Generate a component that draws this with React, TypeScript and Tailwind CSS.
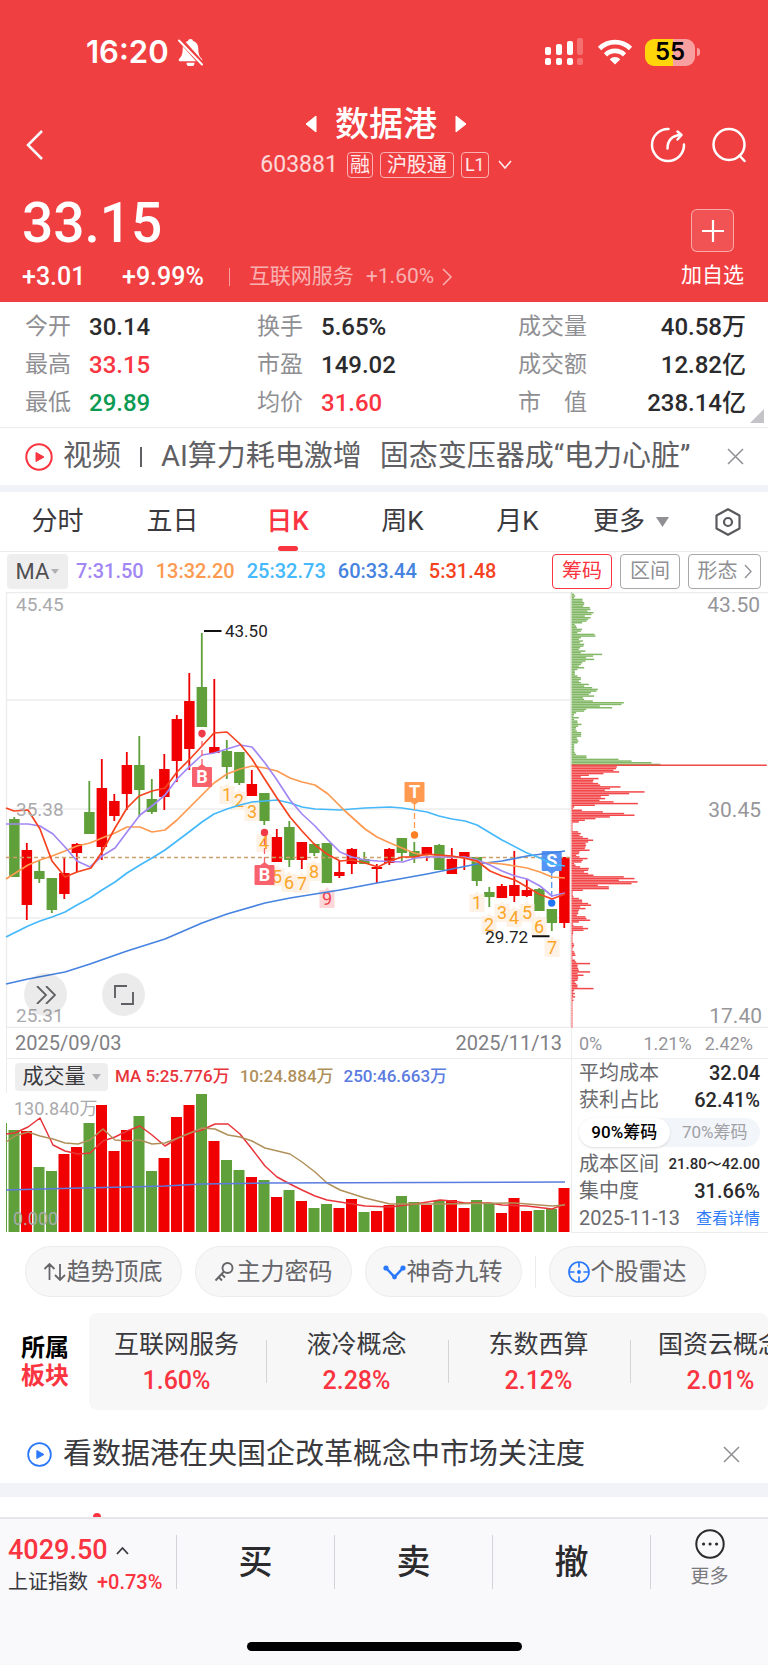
import { useState } from "react";

const UP = "#f00000";
const DOWN = "#5fa03a";

const STATS = [
  { label: "今开", value: "30.14", color: "text-[#2b2b2e]" },
  { label: "换手", value: "5.65%", color: "text-[#2b2b2e]" },
  { label: "成交量", value: "40.58万", color: "text-[#2b2b2e]" },
  { label: "最高", value: "33.15", color: "text-[#fa3440]" },
  { label: "市盈", value: "149.02", color: "text-[#2b2b2e]" },
  { label: "成交额", value: "12.82亿", color: "text-[#2b2b2e]" },
  { label: "最低", value: "29.89", color: "text-[#0a9a52]" },
  { label: "均价", value: "31.60", color: "text-[#fa3440]" },
  { label: "市　值", value: "238.14亿", color: "text-[#2b2b2e]" },
];

const TABS = ["分时", "五日", "日K", "周K", "月K"];

const MA_VALUES = [
  { text: "7:31.50", color: "text-[#a287f4]" },
  { text: "13:32.20", color: "text-[#fd9a52]" },
  { text: "25:32.73", color: "text-[#45b9fb]" },
  { text: "60:33.44", color: "text-[#4683e0]" },
  { text: "5:31.48", color: "text-[#f5431f]" },
];

// [up, high, top, bottom, low] on the y scale of the K line chart
const CANDLES: [number, number, number, number, number][] = [
  [0, 817, 819, 877, 877], [1, 843, 850, 905, 920], [0, 861, 871, 879, 883], [0, 878, 878, 910, 913],
  [1, 858, 873, 894, 899], [1, 843, 844, 853, 872], [0, 781, 812, 834, 834], [1, 759, 788, 847, 860],
  [1, 794, 801, 816, 821], [1, 752, 765, 794, 810], [0, 736, 765, 790, 817], [0, 779, 799, 812, 814],
  [1, 754, 769, 797, 810], [1, 715, 719, 761, 782], [1, 673, 701, 749, 770], [0, 633, 687, 727, 727],
  [1, 679, 747, 753, 753], [0, 740, 751, 767, 779], [0, 752, 752, 783, 785], [1, 770, 784, 796, 796],
  [0, 793, 793, 821, 825], [1, 829, 837, 862, 862], [0, 821, 827, 860, 867], [1, 842, 842, 860, 869],
  [0, 843, 844, 853, 856], [0, 843, 843, 883, 883], [1, 861, 872, 876, 878], [1, 848, 849, 864, 874],
  [0, 852, 859, 864, 864], [1, 864, 867, 869, 883], [1, 848, 849, 863, 865], [0, 838, 838, 853, 861],
  [0, 842, 851, 857, 863], [1, 847, 847, 855, 861], [0, 844, 845, 870, 870], [1, 848, 859, 874, 874],
  [1, 852, 852, 857, 870], [0, 857, 857, 881, 886], [0, 887, 892, 897, 907], [1, 884, 886, 898, 898],
  [1, 851, 885, 896, 902], [1, 879, 890, 896, 897], [0, 888, 889, 911, 911], [0, 909, 909, 923, 931],
  [1, 857, 857, 923, 928],
];

const VOLUMES = [
  102, 101, 65, 61, 78, 85, 109, 127, 81, 102, 116, 61, 74, 115, 127, 138, 91, 72, 62, 55, 52, 35, 42,
  31, 24, 28, 24, 33, 20, 21, 27, 36, 30, 27, 31, 32, 24, 32, 28, 19, 34, 21, 22, 23, 44,
];

const K_LINES = [
  { color: "#4683e0", points: "6,984 28,979 65,972 90,964 127,951 165,939 202,923 227,914 265,903 290,898 340,890 377,883 427,874 477,864 502,861 527,856 565,851" },
  { color: "#45b9fb", points: "6,937 28,926 40,921 52,917 65,912 77,905 90,898 102,890 115,882 127,873 140,865 152,858 165,850 177,841 189,832 202,822 214,814 227,809 240,805 252,802 265,801 277,800 290,803 302,807 315,809 340,810 352,809 365,808 390,807 402,808 415,810 427,812 439,816 452,819 465,821 477,825 502,840 527,853 540,858 552,864 565,866" },
  { color: "#fd9a52", points: "6,879 28,865 40,860 52,856 65,851 77,846 90,843 102,838 115,833 127,827 140,827 152,832 165,830 177,820 189,808 202,795 214,783 227,774 240,769 252,766 265,768 277,771 290,778 302,782 315,785 328,794 345,811 365,829 377,837 390,843 402,848 414,853 427,856 452,857 465,858 477,862 490,863 502,864 515,866 527,868 540,872 552,877 565,878" },
  { color: "#a287f4", points: "6,824 28,824 40,826 53,834 65,847 77,861 90,867 102,856 115,848 127,832 140,815 152,806 165,795 177,779 189,767 202,755 214,753 227,749 240,745 252,747 265,763 277,780 290,800 302,814 315,826 328,840 340,852 352,857 365,860 378,861 403,862 415,858 427,857 465,857 477,860 490,865 502,871 515,876 527,879 540,886 552,896 565,893" },
  { color: "#f5431f", points: "6,808 14,811 28,810 40,829 52,861 65,877 77,872 91,868 102,852 115,828 127,808 139,796 152,791 165,788 177,772 189,760 202,746 214,733 227,732 240,744 252,759 264,778 277,798 290,817 302,831 315,845 327,854 340,861 352,860 365,863 378,867 390,861 402,857 414,857 427,854 439,855 452,856 464,858 477,861 490,871 502,876 515,880 527,887 539,894 552,899 565,894" },
];

const VOL_LINES = [
  { color: "#e8353b", points: "6,1134 15,1133 28,1127 40,1118 53,1145 65,1151 78,1154 90,1153 103,1141 115,1137 127,1131 140,1126 152,1135 165,1146 178,1138 190,1133 202,1130 215,1124 228,1124 240,1134 252,1149 265,1166 277,1177 290,1184 302,1190 315,1196 327,1200 340,1202 365,1206 390,1207 415,1204 440,1200 452,1201 465,1203 490,1203 502,1205 527,1206 552,1209 565,1204" },
  { color: "#b0905a", points: "6,1142 15,1136 28,1132 40,1136 53,1139 65,1143 78,1144 90,1140 103,1129 115,1140 127,1141 140,1140 152,1144 165,1143 178,1138 202,1128 215,1129 228,1135 240,1137 252,1141 265,1148 290,1154 302,1162 315,1172 327,1183 340,1190 365,1198 390,1204 440,1204 515,1203 552,1206 565,1205" },
  { color: "#5b7be0", points: "6,1190 80,1188 127,1187 165,1186 202,1184 265,1183 565,1182" },
];

const COUNTS: [string, number, number][] = [
  ["1", 227, 794], ["2", 239, 800], ["3", 252, 811], ["4", 264, 842], ["5", 277, 876], ["6", 289, 882],
  ["7", 302, 883], ["8", 314, 871], ["9", 327, 898], ["1", 477, 902], ["2", 489, 924], ["3", 502, 912],
  ["4", 514, 917], ["5", 527, 912], ["6", 539, 926], ["7", 552, 947],
];

// chip distribution, three units to a pixel, one row per price step
const CHIPS_ABOVE = [
  2, 8, 11, 8, 33, 33, 38, 38, 35, 55, 57, 48, 66, 60, 40, 57, 50, 45, 32, 10, 14, 16, 32, 28, 18, 69, 72,
  28, 22, 34, 25, 38, 36, 26, 22, 42, 28, 92, 65, 44, 68, 42, 32, 28, 22, 38, 18, 10, 10, 10, 18, 28, 28,
  22, 28, 52, 38, 62, 79, 75, 58, 52, 68, 34, 38, 64, 157, 150, 85, 122, 44, 38, 14, 8, 6, 22, 8, 18, 18,
  30, 20, 14, 12, 16, 29, 29, 29, 16, 18, 21, 18, 8, 8, 8, 8, 8, 10, 14, 45, 45, 141, 180, 240, 267,
];
const CHIPS_BELOW = [
  586, 136, 134, 126, 143, 96, 52, 28, 81, 66, 64, 80, 86, 147, 116, 100, 219, 173, 112, 88, 101, 84, 126,
  199, 70, 8, 4, 31, 94, 158, 189, 115, 72, 40, 22, 3, 3, 3, 3, 3, 20, 28, 24, 34, 50, 65, 50, 42, 44, 42,
  40, 54, 24, 22, 14, 24, 48, 34, 30, 8, 12, 26, 52, 50, 38, 50, 66, 157, 189, 142, 198, 180, 79, 112, 112,
  34, 4, 3, 4, 6, 22, 32, 32, 50, 59, 26, 42, 22, 20, 20, 16, 42, 45, 56, 22, 4, 6, 34, 50, 36, 5, 5, 3, 3,
  3, 3, 3, 6, 8, 6, 3, 3, 8, 10, 12, 3, 3, 10, 14, 56, 18, 18, 20, 22, 56, 18, 36, 20, 20, 18, 10, 14, 18,
  18, 66, 8, 5, 10, 5, 11, 3, 6, 3, 3, 3, 3, 3, 3, 3, 3, 3, 3, 3, 3, 3, 3, 3, 3,
];

const SECTORS = [
  { name: "互联网服务", pct: "1.60%" },
  { name: "液冷概念", pct: "2.28%" },
  { name: "东数西算", pct: "2.12%" },
  { name: "国资云概念", pct: "2.01%" },
];

const candleX = (i: number) => 14.3 + i * 12.5;

function StatusBar() {
  return (
    <div className="flex h-[104px] items-center justify-between pl-[86px] pr-[68px]">
      <div className="flex items-center gap-2">
        <span className="font-[Inter] text-[31px] font-semibold">16:20</span>
        <svg width="27" height="28" viewBox="0 0 27 28" fill="currentColor">
          <path d="M13.500 1a2.600 2.600 0 0 1 2.600 2.100c3.200 1 5.200 4 5.200 7.400 0 5.500 1.200 8.200 3.300 10 .5.500.700 1 .700 1.500 0 .8-.6 1.300-1.500 1.300H3.200c-.9 0-1.500-.5-1.500-1.300 0-.5.200-1 .7-1.500 2.100-1.800 3.300-4.500 3.300-10 0-3.400 2-6.400 5.200-7.400A2.600 2.600 0 0 1 13.500 1z" />
          <path d="M9.500 24.700h8a4 4 0 0 1-8 0z" />
          <path d="M3 1.500 25 26" stroke="#f03f41" strokeWidth="5" />
          <path d="M2 2.500 25 26.500" stroke="currentColor" strokeWidth="2" strokeLinecap="round" />
        </svg>
      </div>
      <div className="flex items-center">
        <svg width="40" height="28" viewBox="0 0 40 28" fill="currentColor">
          <rect x="0" y="9" width="6" height="8" rx="2" />
          <rect x="11" y="6" width="6" height="11" rx="2" />
          <rect x="22" y="3" width="6" height="14" rx="2" />
          <rect x="32" y="0" width="6" height="17" rx="2" opacity=".25" />
          <rect x="0" y="20" width="6" height="7" rx="2" />
          <rect x="11" y="20" width="6" height="7" rx="2" />
          <rect x="22" y="20" width="6" height="7" rx="2" />
          <rect x="32" y="20" width="6" height="7" rx="2" opacity=".25" />
        </svg>
        <svg className="ml-3" width="36" height="26" viewBox="0 0 36 26" fill="none" stroke="currentColor" strokeWidth="4.600">
          <path d="M2.500 9.500a22 22 0 0 1 31 0" />
          <path d="M8.500 15.800a13.500 13.500 0 0 1 19 0" />
          <path d="M18 25.500 12.700 20.200a7.500 7.500 0 0 1 10.600 0z" fill="currentColor" stroke="none" />
        </svg>
        <div className="ml-3 flex h-[27px] w-[50px] items-center justify-center rounded-[9px] bg-[linear-gradient(90deg,#ffd60a_55%,#f89fa0_55%)] font-[Inter] text-[24px] font-semibold text-black">
          55
        </div>
        <span className="ml-0.5 h-2 w-[3px] rounded-r-full bg-[#f89fa0]" />
      </div>
    </div>
  );
}

function Header() {
  return (
    <header className="bg-[#f03f41] text-white">
      <StatusBar />
      <div className="flex h-[82px] items-center justify-between pl-[26px] pr-[22px]">
        <button aria-label="返回" className="w-24">
          <svg width="18" height="30" viewBox="0 0 18 30" fill="none" stroke="currentColor" strokeWidth="2.500">
            <path d="M16 1 2 15l14 14" />
          </svg>
        </button>
        <div className="flex flex-col items-center">
          <div className="flex h-10 items-center gap-[18px]">
            <button aria-label="上一只">
              <svg width="12" height="18" viewBox="0 0 12 18" fill="currentColor"><path d="M11 1v16L1 9z" stroke="currentColor" strokeLinejoin="round" /></svg>
            </button>
            <h1 className="text-[34px] font-medium leading-10">数据港</h1>
            <button aria-label="下一只">
              <svg width="12" height="18" viewBox="0 0 12 18" fill="currentColor"><path d="M1 1v16l10-8z" stroke="currentColor" strokeLinejoin="round" /></svg>
            </button>
          </div>
          <div className="flex h-[42px] items-center gap-[7px] text-[20px] leading-6 text-white/90">
            <span className="mr-0.5 text-[23px] text-white/80">603881</span>
            <span className="rounded border border-white/60 px-0.5">融</span>
            <span className="rounded border border-white/60 px-1.5">沪股通</span>
            <span className="rounded border border-white/60 px-[3px] text-[18px]">L1</span>
            <svg className="ml-0.5" width="14" height="10" viewBox="0 0 14 10" fill="none" stroke="currentColor" strokeWidth="1.500"><path d="m1 1 6 7 6-7" /></svg>
          </div>
        </div>
        <div className="flex w-24 items-center justify-between">
          <button aria-label="分享">
            <svg width="36" height="36" viewBox="0 0 36 36" fill="none" stroke="currentColor" strokeWidth="2.500" strokeLinecap="round" strokeLinejoin="round">
              <path d="M18.500 2A16 16 0 1 0 34 17.500" />
              <path d="M17.500 21.500c0-7.500 4-12.500 12.500-13.500" />
              <path d="m27.500 4.500 4 3.500-4 4.500" />
            </svg>
          </button>
          <button aria-label="搜索">
            <svg width="34" height="36" viewBox="0 0 34 36" fill="none" stroke="currentColor" strokeWidth="2.500" strokeLinecap="round">
              <circle cx="17" cy="17.500" r="15.500" />
              <path d="m27.500 28.500 5 5.500" />
            </svg>
          </button>
        </div>
      </div>
      <div className="flex h-[116px] justify-between pl-[22px] pr-6">
        <div>
          <p className="flex h-[75px] items-center text-[55px] font-medium">33.15</p>
          <div className="flex h-8 items-center text-[25px] font-medium">
            <span className="w-[100px]">+3.01</span>
            <span>+9.99%</span>
            <span className="ml-[25px] mr-[19px] h-[18px] w-px bg-white/50" />
            <a href="#sector" className="flex items-center text-[21px] font-normal text-white/60">
              互联网服务
              <span className="ml-3">+1.60%</span>
              <svg className="ml-2" width="11" height="18" viewBox="0 0 11 18" fill="none" stroke="currentColor" strokeWidth="1.500"><path d="m1 1 8 8-8 8" /></svg>
            </a>
          </div>
        </div>
        <button className="flex flex-col items-center pt-[23px] text-[21px] leading-[46px]">
          <span className="flex h-[43px] w-[43px] items-center justify-center rounded-md border border-white/50 bg-white/10">
            <svg width="22" height="22" viewBox="0 0 22 22" stroke="currentColor" strokeWidth="2.200"><path d="M11 0v22M0 11h22" /></svg>
          </span>
          加自选
        </button>
      </div>
    </header>
  );
}

function Stats() {
  return (
    <dl className="relative grid grid-cols-[232fr_261fr_228fr] border-b border-[#ececec] pb-[5px] pl-[25px] pr-[22px] pt-1.5 text-[23px] leading-[38px]">
      {STATS.map((s, i) => (
        <div key={s.label} className={i % 3 === 2 ? "flex justify-between" : "flex"}>
          <dt className={i % 3 === 2 ? "text-[#8f8f93]" : "w-16 text-[#8f8f93]"}>{s.label}</dt>
          <dd className={`text-[24px] font-medium ${s.color}`}>{s.value}</dd>
        </div>
      ))}
      <svg className="absolute bottom-1 right-1" width="14" height="14" viewBox="0 0 14 14" fill="#c4c4c8"><path d="M14 0v14H0z" /></svg>
    </dl>
  );
}

function PlayIcon({ size }: { size: number }) {
  return (
    <svg width={size} height={size} viewBox="0 0 28 28" fill="none" stroke="currentColor" strokeWidth="2">
      <circle cx="14" cy="14" r="12.700" />
      <path d="M11 9.500v9l8-4.500z" fill="currentColor" strokeLinejoin="round" strokeWidth="1" />
    </svg>
  );
}

function CloseButton() {
  return (
    <button aria-label="关闭" className="ml-auto text-[#8f8f93]">
      <svg width="17" height="17" viewBox="0 0 17 17" fill="none" stroke="currentColor" strokeWidth="1.500"><path d="m1 1 15 15M16 1 1 16" /></svg>
    </button>
  );
}

function Tabs() {
  const [tab, setTab] = useState("日K");
  return (
    <nav className="flex h-[60px] border-b border-[#ececec] text-[26px] text-[#3a3a3e]">
      {TABS.map((t) => (
        <button key={t} onClick={() => setTab(t)} className={`relative flex-[115] ${tab === t ? "font-medium text-[#fa3440]" : ""}`}>
          {t}
          {tab === t && <span className="absolute bottom-0 left-1/2 h-[5px] w-5 -translate-x-1/2 rounded-full bg-[#fa3440]" />}
        </button>
      ))}
      <button className="flex flex-[112] items-center justify-center gap-[11px]">
        更多
        <svg width="13" height="10" viewBox="0 0 13 10" fill="#909094"><path d="M0 0h13L6.500 10z" /></svg>
      </button>
      <button aria-label="设置" className="flex flex-[81] items-center justify-center text-[#5a5a5e]">
        <svg width="28" height="28" viewBox="0 0 28 28" fill="none" stroke="currentColor" strokeWidth="2.200" strokeLinejoin="round">
          <path d="M14 1.200 25.500 7.500v13L14 26.800 2.500 20.500v-13z" />
          <circle cx="14" cy="14" r="4" />
        </svg>
      </button>
    </nav>
  );
}

function MaBar() {
  return (
    <div className="flex h-10 items-center px-[7px] pb-1 pt-0.5 text-[20px]">
      <button className="flex h-[35px] w-[61px] items-center justify-center gap-0.5 rounded bg-[#eeeeef] text-[22px] text-[#505054]">
        MA
        <svg width="8" height="5" viewBox="0 0 8 5" fill="#b0b0b4"><path d="M0 0h8L4 5z" /></svg>
      </button>
      <div className="ml-2 flex gap-3 font-medium">
        {MA_VALUES.map((m) => (
          <span key={m.text} className={m.color}>{m.text}</span>
        ))}
      </div>
      <div className="ml-auto flex gap-2 text-[#8f8f93]">
        <button className="h-[35px] w-[60px] rounded border border-[#fa3440] text-[#fa3440]">筹码</button>
        <button className="h-[35px] w-[60px] rounded border border-[#a8a8ac]">区间</button>
        <button className="flex h-[35px] w-[73px] items-center justify-center gap-1.5 rounded border border-[#a8a8ac]">
          形态
          <svg width="8" height="15" viewBox="0 0 8 15" fill="none" stroke="currentColor" strokeWidth="1.300"><path d="m1 1 6 6.500L1 14" /></svg>
        </button>
      </div>
    </div>
  );
}

interface SignalProps {
  letter: string;
  x: number;
  y: number;
  dotY: number;
  color: string;
  dotColor: string;
}

function Signal({ letter, x, y, dotY, color, dotColor }: SignalProps) {
  const above = y < dotY;
  return (
    <g>
      <path d={`M${x} ${above ? y + 12 : y - 12}V${dotY}`} stroke={color} strokeWidth="1.300" strokeDasharray="6 3" />
      <circle cx={x} cy={dotY} r="3.700" fill={dotColor} />
      <rect x={x - 10} y={y - 10} width="20" height="20" rx="1" fill={color} />
      <path d={above ? `M${x - 4} ${y + 10}h8l-4 3z` : `M${x - 4} ${y - 10}h8l-4-3z`} fill={color} />
      <text x={x} y={y + 6} textAnchor="middle" fontSize="18" fontWeight="700" fill="#fff">{letter}</text>
    </g>
  );
}

function KLineChart() {
  return (
    <div className="relative">
      <svg className="block w-full" viewBox="0 592 571 436" role="img" aria-label="日K线">
        <g stroke="#ececec" strokeWidth="1.300">
          {[592.7, 700, 809, 918, 1027.3].map((y) => (
            <path key={y} d={`M6 ${y}H571`} />
          ))}
          <path d="M6.500 592V1028M570.500 592V1028" />
        </g>
        {CANDLES.map(([up, high, top, bottom, low], i) => (
          <g key={i} fill={up ? UP : DOWN}>
            <rect x={candleX(i) - 0.9} y={high} width="1.800" height={low - high} />
            <rect x={candleX(i) - 5.2} y={top} width="10.500" height={bottom - top} />
          </g>
        ))}
        <path d="M6 857.500H571" stroke="#c9a06a" strokeWidth="1.300" strokeDasharray="4 3" />
        {COUNTS.map(([n, x, y]) => (
          <g key={n + x}>
            <path d={`M${x - 7.5} ${y - 8}h5l2.500-3 2.500 3h5v18h-15z`} fill={n === "9" ? "#fbd0d4" : "#fdf0e0"} opacity=".85" />
            <text x={x} y={y + 7} textAnchor="middle" fontSize="18" fill={n === "9" ? "#f0404a" : "#fba528"}>{n}</text>
          </g>
        ))}
        <Signal letter="S" x={551.7} y={861} dotY={903} color="#5593f5" dotColor="#1e74f5" />
        {K_LINES.map((l) => (
          <polyline key={l.color} points={l.points} fill="none" stroke={l.color} strokeWidth="1.700" strokeLinejoin="round" />
        ))}
        <Signal letter="B" x={202} y={777} dotY={733.5} color="#f7626c" dotColor="#f03a48" />
        <Signal letter="B" x={264.5} y={875} dotY={832.5} color="#f7626c" dotColor="#f03a48" />
        <Signal letter="T" x={414.5} y={792} dotY={835} color="#ff9a50" dotColor="#ff8124" />
        <g fontSize="17" fill="#222">
          <path d="M204 631h17.500M532 936.300h17.500" stroke="#111" strokeWidth="2" />
          <text x="225" y="637">43.50</text>
          <text x="528" y="943" textAnchor="end">29.72</text>
        </g>
        <g fontSize="19" fill="#aaaaad">
          <text x="16" y="611">45.45</text>
          <text x="16" y="816">35.38</text>
          <text x="16" y="1022">25.31</text>
        </g>
      </svg>
      <button aria-label="展开" className="absolute bottom-3 left-6 flex h-[43px] w-[43px] items-center justify-center rounded-full bg-black/8 text-[#606064]">
        <svg width="20" height="18" viewBox="0 0 20 18" fill="none" stroke="currentColor" strokeWidth="1.800"><path d="m1 0 9 9-9 9M10 0l9 9-9 9" /></svg>
      </button>
      <button aria-label="全屏" className="absolute bottom-3 left-[102px] flex h-[43px] w-[43px] items-center justify-center rounded-full bg-black/8 text-[#606064]">
        <svg width="20" height="20" viewBox="0 0 20 20" fill="none" stroke="currentColor" strokeWidth="1.900"><path d="M1 13V1h12M19 7v12H7" /></svg>
      </button>
    </div>
  );
}

function VolumeChart() {
  return (
    <>
      <div className="ml-1.5 flex h-[34px] items-center border-l border-[#ececec] pl-2 pt-0.5 text-[17px] font-medium">
        <button className="flex h-7 w-[93px] items-center justify-center gap-1.5 rounded bg-[#eeeeef] text-[21px] font-normal text-[#3a3a3e]">
          成交量
          <svg width="9" height="6" viewBox="0 0 9 6" fill="#b0b0b4"><path d="M0 0h9L4.500 6z" /></svg>
        </button>
        <span className="ml-[7px] text-[#e8353b]">MA 5:25.776万</span>
        <span className="ml-2.5 text-[#b0905a]">10:24.884万</span>
        <span className="ml-2.5 text-[#5b7be0]">250:46.663万</span>
      </div>
      <svg className="block w-full" viewBox="0 1093 571 139" role="img" aria-label="成交量">
        <rect x="6" y="1123" width="1" height="109" fill={DOWN} />
        {VOLUMES.map((v, i) => (
          <rect key={i} x={candleX(i) - 5.8} y={1232 - v} width="11" height={v} fill={CANDLES[i][0] ? UP : DOWN} />
        ))}
        {VOL_LINES.map((l) => (
          <polyline key={l.color} points={l.points} fill="none" stroke={l.color} strokeWidth="1.500" strokeLinejoin="round" />
        ))}
        <g fontSize="18" fill="#aaaaad">
          <text x="14" y="1115">130.840万</text>
          <text x="13" y="1225">0.000</text>
        </g>
      </svg>
    </>
  );
}

function ChipChart() {
  return (
    <svg className="block w-full" viewBox="571 592 197 436" role="img" aria-label="筹码分布">
      <path d="M571 592.700H768M571 1027.300H768" stroke="#ececec" strokeWidth="1.300" />
      {CHIPS_ABOVE.map((w, i) => (
        <rect key={i} x="571.500" y={592 + (i * 5) / 3} width={w / 3} height="1.500" fill="#83b867" />
      ))}
      {CHIPS_BELOW.map((w, i) => (
        <rect key={i} x="571.500" y={764.5 + (i * 5) / 3} width={w / 3} height="1.500" fill="#f2474b" />
      ))}
      <g fontSize="21" fill="#96969a" textAnchor="end">
        <text x="760" y="612">43.50</text>
        <text x="761" y="817">30.45</text>
        <text x="762" y="1023">17.40</text>
      </g>
    </svg>
  );
}

function ChipStats() {
  const [range, setRange] = useState("90");
  const base = "flex-1 rounded-full text-[17px]";
  return (
    <div className="border-b border-l border-[#ececec] pl-[7px] pr-2 pt-px text-[20px] leading-[27px] text-[#6a6a6e]">
      <div className="flex justify-between"><span>平均成本</span><b className="font-medium text-[#2b2b2e]">32.04</b></div>
      <div className="flex justify-between"><span>获利占比</span><b className="font-medium text-[#2b2b2e]">62.41%</b></div>
      <div className="mb-1 mt-1 flex h-[29px] rounded-full bg-[#f2f5f9]">
        <button onClick={() => setRange("90")} className={`${base} ${range === "90" ? "bg-white font-medium text-black shadow" : "text-[#a0a0a4]"}`}>90%筹码</button>
        <button onClick={() => setRange("70")} className={`${base} ${range === "70" ? "bg-white font-medium text-black shadow" : "text-[#a0a0a4]"}`}>70%筹码</button>
      </div>
      <div className="flex justify-between"><span>成本区间</span><b className="text-[15px] font-medium text-[#2b2b2e]">21.80～42.00</b></div>
      <div className="flex justify-between"><span>集中度</span><b className="font-medium text-[#2b2b2e]">31.66%</b></div>
      <div className="flex justify-between"><span>2025-11-13</span><a href="#detail" className="text-[16px] text-[#2f7cf6]">查看详情</a></div>
    </div>
  );
}

const CHIP_CLASS = "flex h-[51px] w-[157px] items-center justify-center rounded-full border border-[#ececec] bg-[#f7f7f8] pr-0.5";

function Tools() {
  return (
    <div className="flex items-center gap-[13px] pl-[25px] pt-[13px] text-[24px] text-[#66666a]">
      <button className={CHIP_CLASS}>
        <svg width="24" height="24" viewBox="0 0 24 24" fill="none" stroke="currentColor" strokeWidth="1.800">
          <path d="M6.500 20V4M1.500 9l5-5 5 5M17 4v16M12 15l5 5 5-5" />
        </svg>
        趋势顶底
      </button>
      <button className={CHIP_CLASS}>
        <svg width="24" height="24" viewBox="0 0 24 24" fill="none" stroke="currentColor" strokeWidth="1.900">
          <circle cx="14.500" cy="8" r="5" />
          <path d="M11 11.500 2.500 20.500M5.500 17l3.500 3.500M8.500 14l3.500 3.500" />
        </svg>
        主力密码
      </button>
      <button className={CHIP_CLASS}>
        <svg width="24" height="24" viewBox="0 0 24 24" fill="#2a78fb">
          <path d="m3 8 8.500 9L20 8" fill="none" stroke="#2a78fb" strokeWidth="2.500" />
          <circle cx="3" cy="8" r="2.600" />
          <circle cx="20" cy="8" r="2.600" />
          <circle cx="11.500" cy="17" r="2.400" />
        </svg>
        神奇九转
      </button>
      <span className="h-8 w-px bg-[#ececec]" />
      <button className={CHIP_CLASS}>
        <svg width="24" height="24" viewBox="0 0 24 24" fill="none" stroke="#2a78fb" strokeWidth="1.700">
          <circle cx="12" cy="12" r="10" />
          <path d="M12 2v5.500M12 16.500V22M2 12h5.500M16.500 12H22" />
          <circle cx="12" cy="12" r="2" fill="#2a78fb" stroke="none" />
        </svg>
        个股雷达
      </button>
    </div>
  );
}

function Sectors() {
  return (
    <section id="sector" className="mt-4 flex items-center">
      <h2 className="w-[89px] shrink-0 pl-[21px] text-[24px] font-bold leading-7 text-black">
        所属<br /><span className="text-[#fa3440]">板块</span>
      </h2>
      <div className="flex h-[97px] min-w-0 flex-1 items-center overflow-hidden rounded-lg bg-[#f7f7f8]">
        {SECTORS.map((s) => (
          <div key={s.name} className="flex w-[182px] shrink-0 items-center first:w-[178px]">
            <a href="#sector" className="flex-1 whitespace-nowrap pr-0.5 pt-[3px] text-center text-[25px] leading-9 text-[#3a3a3e]">
              {s.name}
              <span className="block font-medium text-[#fa3440]">{s.pct}</span>
            </a>
            <span className="h-[43px] w-px bg-[#d4d4d8]" />
          </div>
        ))}
      </div>
    </section>
  );
}

function BottomBar() {
  return (
    <footer className="border-t-2 border-[#e6e6ea] bg-[#f9f9fc]">
      <div className="flex h-[86px] items-center">
        <button className="w-[176px] pl-2 pt-2 text-left text-[20px] leading-8 text-[#3a3a3e]">
          <span className="flex h-8 items-center gap-2 text-[27px] font-medium text-[#fa3440]">
            4029.50
            <svg width="13" height="9" viewBox="0 0 13 9" fill="none" stroke="#3a3a3e" strokeWidth="1.800"><path d="m1 8 5.500-6L12 8" /></svg>
          </span>
          上证指数 <span className="ml-1 font-medium text-[#fa3440]">+0.73%</span>
        </button>
        {["买", "卖", "撤"].map((t) => (
          <button key={t} className="h-[54px] flex-1 border-l border-[#d4d4d8] text-[34px] font-medium leading-[54px] text-[#2b2b2e]">{t}</button>
        ))}
        <button className="flex h-[54px] w-[118px] flex-col items-center justify-center border-l border-[#d4d4d8] text-[19px] leading-[36px] text-[#7a7a7e]">
          <svg className="shrink-0" width="30" height="30" viewBox="0 0 30 30" fill="none" stroke="#2b2b2e" strokeWidth="2">
            <circle cx="15" cy="15" r="13.700" />
            <path d="M8.500 15h.1M15 15h.1M21.500 15h.1" strokeWidth="3" strokeLinecap="round" />
          </svg>
          更多
        </button>
      </div>
      <div className="flex h-[60px] items-end justify-center pb-[14px]">
        <span className="h-[9px] w-[275px] rounded-full bg-black" />
      </div>
    </footer>
  );
}

export default function App() {
  return (
    <div className="overflow-hidden bg-white font-[Roboto,'Noto_Sans_CJK_SC',sans-serif]">
      <Header />
      <Stats />
      <div className="flex h-[57px] items-center pl-[25px] pr-6 text-[29px] text-[#606064]">
        <span className="mr-2.5 text-[#fa3440]"><PlayIcon size={28} /></span>
        <p className="flex items-center whitespace-nowrap">
          视频
          <span className="mx-[19px] h-5 w-0.5 bg-[#606064]" />
          AI算力耗电激增<span className="ml-[18px]">固态变压器成“电力心脏”</span>
        </p>
        <CloseButton />
      </div>
      <div className="h-[7px] bg-[#f2f3f8]" />
      <Tabs />
      <MaBar />
      <div className="flex">
        <div className="min-w-0 flex-[571]">
          <KLineChart />
          <div className="ml-1.5 flex h-[31px] items-center justify-between border-b border-l border-[#ececec] pl-2 pr-[9px] text-[20px] text-[#808084]">
            <span>2025/09/03</span>
            <span>2025/11/13</span>
          </div>
          <VolumeChart />
        </div>
        <div className="min-w-0 flex-[197]">
          <ChipChart />
          <div className="flex h-[31px] items-center justify-between border-b border-l border-[#ececec] pl-[7px] pr-[15px] text-[18px] text-[#96969a]">
            <span>0%</span>
            <span className="ml-7">1.21%</span>
            <span>2.42%</span>
          </div>
          <ChipStats />
        </div>
      </div>
      <Tools />
      <Sectors />
      <div className="flex h-[73px] items-center pl-[27px] pr-7 pt-4 text-[29px] text-[#3a3a3e]">
        <span className="mr-[11px] text-[#2a78fb]"><PlayIcon size={25} /></span>
        看数据港在央国企改革概念中市场关注度
        <CloseButton />
      </div>
      <div className="h-[14px] bg-[#f2f3f8]" />
      <div className="flex h-5 items-end overflow-hidden pl-[93px]">
        <span className="h-1 w-2 rounded-t-full bg-[#fa3440]" />
      </div>
      <BottomBar />
    </div>
  );
}
